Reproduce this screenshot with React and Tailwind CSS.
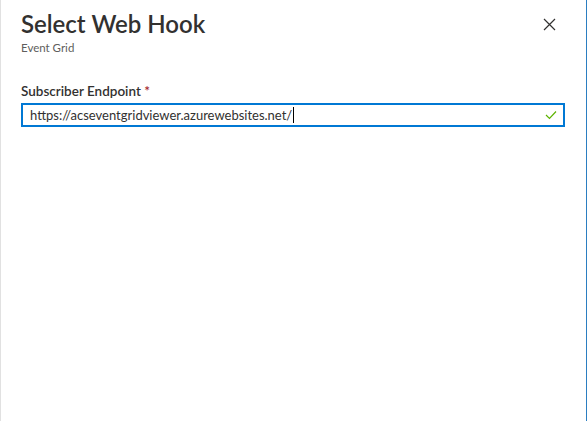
import React from "react";

export default function App() {
  return (
    <div
      className="w-[587px] h-[421px] bg-white flex overflow-hidden"
      style={{ fontFamily: 'Lato, "Open Sans", sans-serif' }}
    >
      <div className="w-px bg-[#e1e1e1]" />
      <div className="flex-1 flex flex-col pl-[20px] pr-[21px] pt-[8px]">
        <div className="flex items-start justify-between">
          <div className="flex flex-col">
            <div className="text-[24px] leading-[32px] text-[#323130] font-semibold">
              Select Web Hook
            </div>
            <div className="text-[11.5px] leading-[14px] text-[#605e5c] mt-[1px]">Event Grid</div>
          </div>
          <button className="mt-[9px] mr-[9px] w-[14px] h-[14px] flex items-center justify-center">
            <svg width="13" height="13" viewBox="0 0 13 13">
              <path d="M1 1 L12 12 M12 1 L1 12" stroke="#323130" strokeWidth="1.2" fill="none" />
            </svg>
          </button>
        </div>
        <div className="mt-[27px] text-[13.5px] leading-[18px] text-[#323130] font-semibold">
          Subscriber Endpoint <span className="text-[#a4262c]">*</span>
        </div>
        <div className="mt-[3px] h-[24px] border-2 border-[#0078d4] flex items-center pl-[7px] pr-[6px]">
          <span className="text-[13px] text-[#323130] leading-[18px]">
            https://acseventgridviewer.azurewebsites.net/
          </span>
          <span className="w-px h-[16px] bg-black ml-px" />
          <div className="flex-1" />
          <svg width="12" height="10" viewBox="0 0 12 10">
            <path d="M1 5 L4.5 8.5 L11 1.5" stroke="#5db300" strokeWidth="1.2" fill="none" />
          </svg>
        </div>
      </div>
      <div className="w-px bg-[#2b7ec1]" />
    </div>
  );
}
